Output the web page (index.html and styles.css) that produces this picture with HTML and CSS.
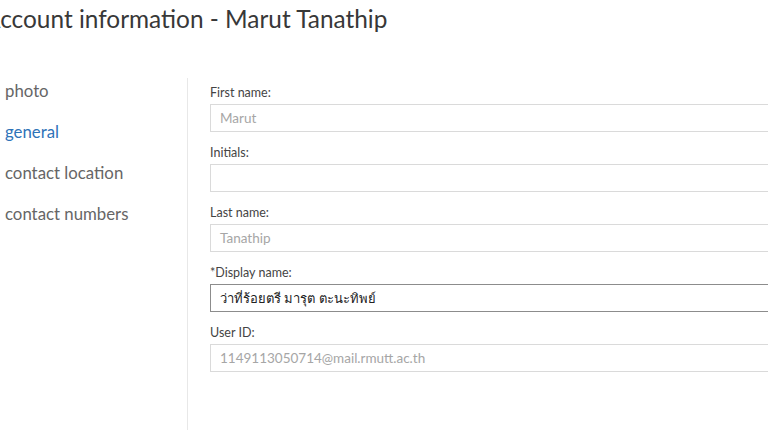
FILE: index.html
```html
<!DOCTYPE html>
<html lang="en">
<head>
<meta charset="utf-8">
<title>Account information - Marut Tanathip</title>
<link rel="stylesheet" href="styles.css">
</head>
<body>
<div class="page">
  <h1 class="title">Account information - Marut Tanathip</h1>
  <div class="content">
    <nav class="nav">
      <a class="nav-item">photo</a>
      <a class="nav-item selected">general</a>
      <a class="nav-item">contact location</a>
      <a class="nav-item">contact numbers</a>
    </nav>
    <form class="form">
      <div class="field">
        <label class="label">First name:</label>
        <div class="input disabled">Marut</div>
      </div>
      <div class="field">
        <label class="label">Initials:</label>
        <div class="input disabled"></div>
      </div>
      <div class="field">
        <label class="label">Last name:</label>
        <div class="input disabled">Tanathip</div>
      </div>
      <div class="field">
        <label class="label">*Display name:</label>
        <div class="input active"><span class="thai">ว่าที่ร้อยตรี มารุต ตะนะทิพย์</span></div>
      </div>
      <div class="field">
        <label class="label">User ID:</label>
        <div class="input disabled">1149113050714@mail.rmutt.ac.th</div>
      </div>
    </form>
  </div>
</div>
</body>
</html>
```

FILE: styles.css
```css
html, body {
  margin: 0;
  padding: 0;
  background: #ffffff;
  overflow: hidden;
  width: 768px;
  height: 430px;
}

.page {
  font-family: Lato, "Open Sans", "Noto Sans", "Liberation Sans", sans-serif;
  color: #333333;
  display: flex;
  flex-direction: column;
}

.title {
  margin: 0 0 0 -16px;
  padding-top: 3px;
  font-size: 24.4px;
  line-height: 32px;
  font-weight: 400;
  color: #383838;
  white-space: nowrap;
}

.content {
  display: flex;
  margin-top: 43px;
  height: 352px;
}

.nav {
  width: 188px;
  box-sizing: border-box;
  padding: 1px 0 0 5px;
  border-right: 1px solid #e8e8e8;
  display: flex;
  flex-direction: column;
  flex-shrink: 0;
}

.nav-item {
  font-size: 16.8px;
  line-height: 24px;
  margin-bottom: 17px;
  color: #666666;
  white-space: nowrap;
}

.nav-item.selected {
  color: #2e73b8;
}

.form {
  padding: 5px 0 0 22px;
  display: flex;
  flex-direction: column;
  flex-shrink: 0;
}

.field {
  display: flex;
  flex-direction: column;
  margin-bottom: 11px;
}

.label {
  font-size: 12.5px;
  line-height: 20px;
  height: 21px;
  color: #444444;
}

.input {
  box-sizing: border-box;
  width: 600px;
  height: 28px;
  border: 1px solid #dadada;
  padding: 0 9px;
  font-size: 13.5px;
  line-height: 26px;
  white-space: nowrap;
  background: #ffffff;
}

.input.disabled {
  color: #a6a6a6;
}

.input.active {
  border-color: #8c8c8c;
  color: #222222;
}

.thai {
  font-size: 13px;
}
```
